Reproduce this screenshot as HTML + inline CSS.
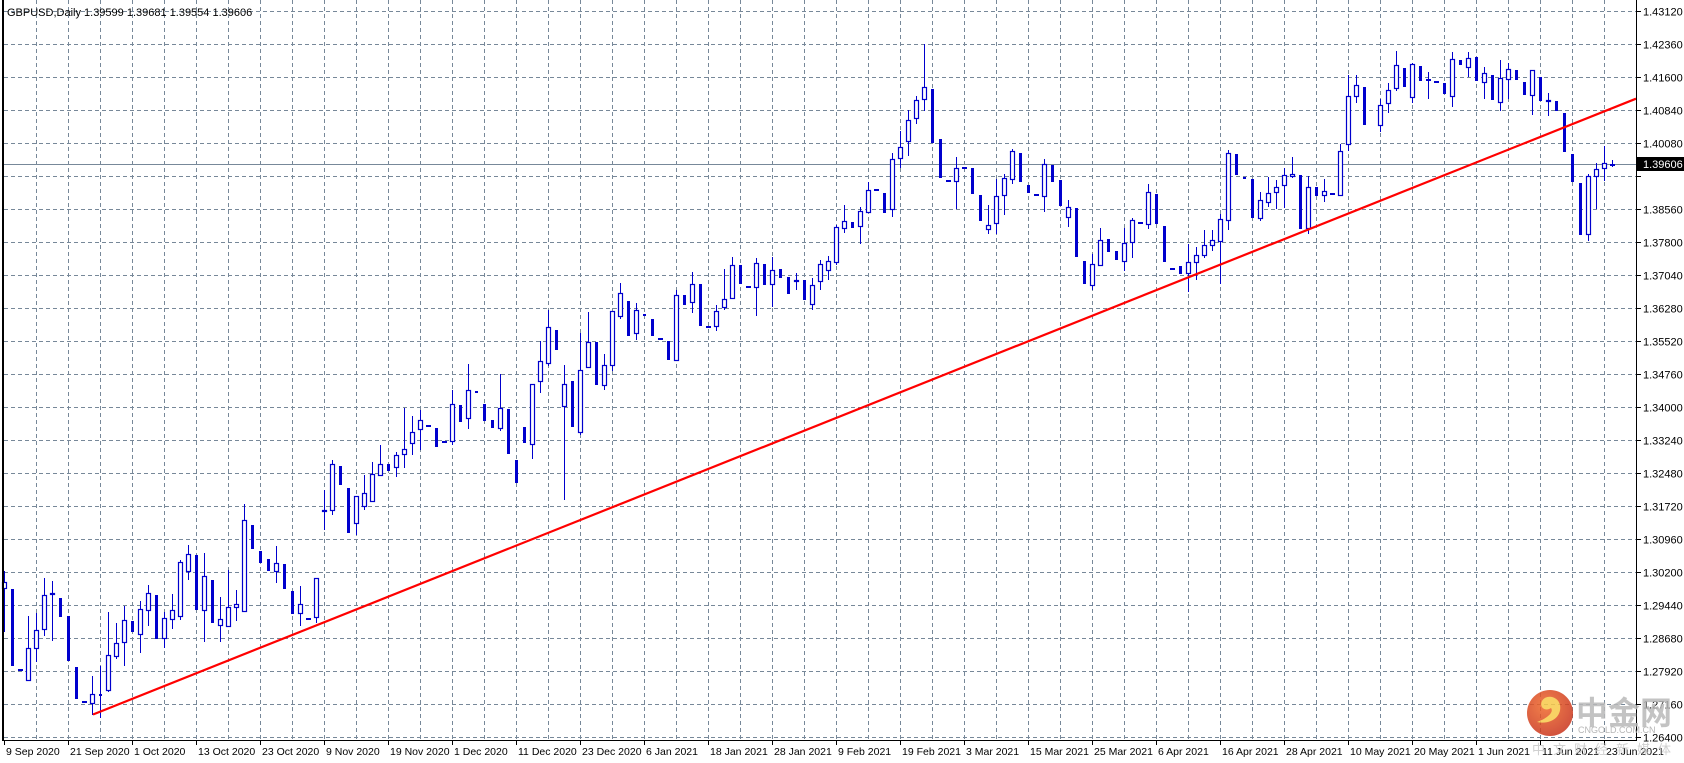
<!DOCTYPE html>
<html><head><meta charset="utf-8"><style>
html,body{margin:0;padding:0;background:#fff;width:1684px;height:763px;overflow:hidden}
svg{display:block}
text{font-family:"Liberation Sans",Tahoma,sans-serif;font-size:11px;fill:#000}
</style></head><body>
<svg id="c" width="1684" height="763" xmlns="http://www.w3.org/2000/svg">
<rect width="1684" height="763" fill="#fff"/>
<g id="grid" stroke="#778899" stroke-width="1" stroke-dasharray="4,3"></g>
<line x1="3" y1="164.5" x2="1636" y2="164.5" stroke="#778899" stroke-width="1"/>
<g id="candles"></g>
<line x1="93" y1="714.5" x2="1636" y2="98.7" stroke="#ff0000" stroke-width="2.2"/>
<line x1="3" y1="0" x2="3" y2="741" stroke="#000" stroke-width="2"/>
<line x1="1636.5" y1="0" x2="1636.5" y2="741" stroke="#000" stroke-width="1"/>
<line x1="3" y1="740.5" x2="1637" y2="740.5" stroke="#000" stroke-width="1"/>
<g id="axes"></g>
<text x="7" y="16">GBPUSD,Daily  1.39599 1.39681 1.39554 1.39606</text>
<rect x="1637" y="157" width="47" height="14" fill="#000"/>
<text x="1643" y="168" style="fill:#fff">1.39606</text>
<g opacity="0.85">
<defs><radialGradient id="lg" cx="0.4" cy="0.35" r="0.7"><stop offset="0" stop-color="#f06a2a"/><stop offset="1" stop-color="#c8321c"/></radialGradient></defs>
<circle cx="1550" cy="713" r="23" fill="url(#lg)"/>
<path d="M1537 722 C1552 725 1562 716 1560 705 C1558 696 1546 694 1542 701 C1539 707 1545 712 1551 708 C1554 712 1548 718 1537 722 Z" fill="#f7c94a"/>
<text x="1576" y="724" style="font-family:'Noto Sans CJK SC',sans-serif;font-size:32px;fill:#b9b9b9;font-weight:bold">中金网</text>
<text x="1578" y="733" style="font-size:9px;fill:#aaa">CNGOLD.COM.CN</text>
<text x="1532" y="754" style="font-family:'Noto Sans CJK SC',sans-serif;font-size:13px;fill:#c8c8c8;letter-spacing:8px">中文财经新媒体</text>
</g>
</svg>
<script>
(function(){
var NS="http://www.w3.org/2000/svg";
function el(parent,tag,attrs,txt){var e=document.createElementNS(NS,tag);for(var k in attrs)e.setAttribute(k,attrs[k]);if(txt!=null)e.textContent=txt;parent.appendChild(e);return e;}
var g=document.getElementById('grid');
for(var k=0;k<=22;k++){var y=11.5+33*k;el(g,'line',{x1:4,y1:y,x2:1636,y2:y});}
for(var k=0;k<=49;k++){var x=36.5+32*k;el(g,'line',{x1:x,y1:0,x2:x,y2:740});}
var ax=document.getElementById('axes');
for(var k=0;k<=22;k++){var y=11.5+33*k;var p=(1.4312-0.0076*k).toFixed(5);
el(ax,'line',{x1:1636,y1:y,x2:1641,y2:y,stroke:'#000'});
if(k!==5)el(ax,'text',{x:1643,y:y+4},p);}
var d=["9 Sep 2020","21 Sep 2020","1 Oct 2020","13 Oct 2020","23 Oct 2020","9 Nov 2020","19 Nov 2020","1 Dec 2020","11 Dec 2020","23 Dec 2020","6 Jan 2021","18 Jan 2021","28 Jan 2021","9 Feb 2021","19 Feb 2021","3 Mar 2021","15 Mar 2021","25 Mar 2021","6 Apr 2021","16 Apr 2021","28 Apr 2021","10 May 2021","20 May 2021","1 Jun 2021","11 Jun 2021","23 Jun 2021"];
for(var k=0;k<d.length;k++){var x=4+64*k;
el(ax,'line',{x1:x+0.5,y1:740,x2:x+0.5,y2:745,stroke:'#000'});
el(ax,'text',{x:x+2,y:755,style:'font-size:10.5px'},d[k]);}
var D=[
[589,582,571,632],[589,666],[669,669],[681,648,616,681],[649,630,613,662],[630,595,578,636],[595,593,581,641],[598,617],[616,661],[667,699],
[701,701],[704,694,676,715],[694,696,666,718],[691,655,612,692],[657,643,623,659],[643,620,606,666],[621,632],[635,609,601,653],[611,593,585,626],[595,639],
[639,618,612,648],[620,610,594,629],[617,562,560,620],[572,554,545,580],[555,610],[611,576,553,642],[580,623],[626,619,597,642],[627,607,570,627],[608,604,590,621],
[612,520,504,612],[525,549],[551,563],[559,571],[572,563,546,583],[564,589],[591,614],[614,604,586,626],[618,618],[618,578,578,623],
[512,510,490,530],[511,464,460,515],[466,485],[488,533],[524,496,496,535],[507,493,475,510],[502,474,462,502],[476,464,445,476],[464,471],[468,455,452,477],
[455,449,408,468],[444,432,416,455],[430,420,410,450],[425,426],[428,447],[441,442],[442,404,390,445],[405,422],[419,390,364,429],[391,393],
[404,421],[420,428],[429,408,374,431],[409,454],[460,483],[427,443],[445,384,384,459],[382,361,341,393],[364,327,310,366],[330,350],
[407,384,365,500],[381,427],[433,370,333,435],[368,342,312,368],[342,385],[386,365,354,390],[366,311,311,371],[317,293,283,319],[301,336],[334,310,303,340],
[314,316],[319,336],[338,338],[341,360],[361,295,290,361],[295,305],[303,284,272,313],[284,326],[326,326],[327,311,305,331],
[308,299,269,310],[299,265,257,299],[265,284],[286,287],[288,263,258,316],[264,285],[285,270,257,307],[269,278],[277,294],[282,280,273,290],
[280,300],[305,285,278,310],[282,264,260,290],[271,261,256,280],[263,227,225,265],[229,221,205,233],[222,228],[227,211,207,244],[213,190,182,213],[189,189],
[193,213],[210,159,153,217],[159,147,131,168],[142,120,110,156],[119,100,96,124],[100,87,44,111],[89,143],[139,178],[180,180],[182,168,157,209],
[167,167],[168,194],[195,221],[230,225,205,234],[224,196,179,234],[196,178,174,215],[180,151,149,184],[153,182],[185,193],[194,194],
[197,164,159,212],[165,182],[180,206],[218,207,200,227],[208,257],[261,284],[286,264,254,290],[266,240,228,266],[239,252],[251,260],
[262,243,228,271],[243,220,218,258],[222,222],[225,192,184,229],[194,224],[226,262],[268,268],[266,274],[274,262,244,292],[263,255,247,280],
[256,245,230,258],[246,240,230,251],[242,219,214,284],[221,153,150,230],[154,175],[177,179],[179,218],[219,200,192,221],[203,193,177,207],[193,187,180,209],
[186,175,168,208],[177,174,157,178],[175,229],[229,187,176,234],[187,196],[196,191,179,202],[193,193],[196,151,144,196],[145,96,75,151],[97,85,75,103],
[87,125],null,[126,105,99,132],[104,90,83,113],[89,65,51,91],[68,87],[98,64,63,103],[66,81],[79,80,72,99],[81,81],
[83,94],[97,59,52,107],[60,65],[68,58,52,77],[57,81],[83,73,67,99],[75,100],[103,78,60,111],[80,69,63,99],[70,80],
[82,95],[96,70,70,115],[77,101],[102,100,93,116],[101,111],[113,152],[154,182],[183,235],[235,176,174,241],[177,169,163,209],
[169,163,146,181],[164,164,160,167]
];
var cg=document.getElementById('candles');var C="#0000cd";
for(var i=0;i<D.length;i++){var b=D[i];if(!b)continue;
var o=b[0],c=b[1],cx=4+8*i;var bt=Math.min(o,c),bb=Math.max(o,c);
var h=b.length>2?b[2]:bt,l=b.length>3?b[3]:bb;
if(h<bt||l>bb)el(cg,'line',{x1:cx+0.5,y1:h,x2:cx+0.5,y2:l,stroke:C,'stroke-width':1});
if(bb-bt<2){el(cg,'rect',{x:cx-2,y:bt,width:5,height:2,fill:C});}
else if(c<o){el(cg,'rect',{x:cx-1.5,y:bt+0.5,width:4,height:bb-bt-1,fill:'#fff',stroke:C,'stroke-width':1.2});}
else{el(cg,'rect',{x:cx-1,y:bt,width:3,height:bb-bt,fill:C});}
}
})();
</script>
</body></html>
